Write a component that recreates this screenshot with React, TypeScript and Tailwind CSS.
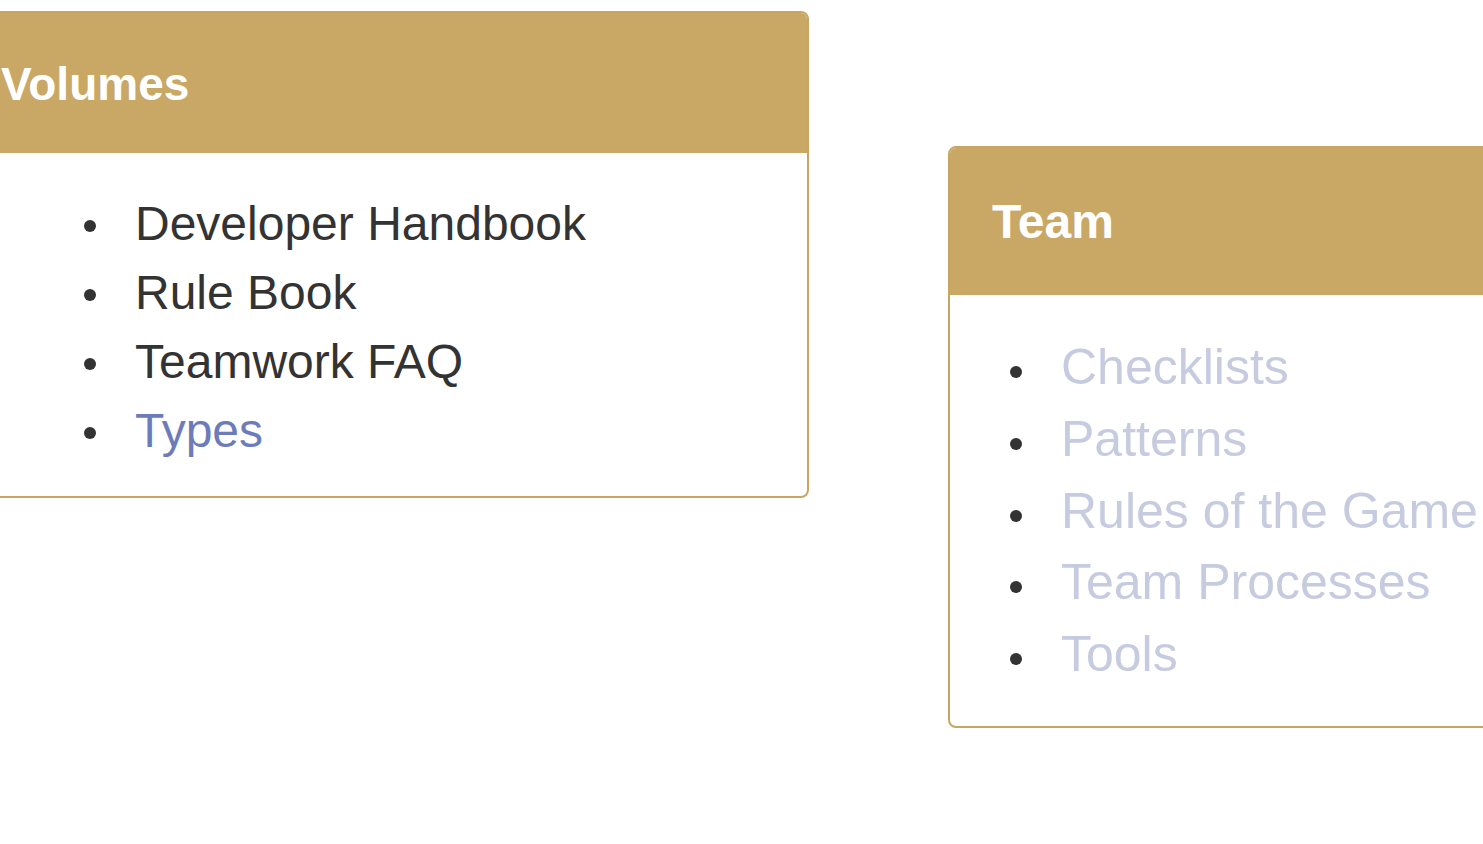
import React from 'react';

interface Item {
  label: string;
  tone: 'dark' | 'link' | 'muted';
}

const VOLUMES: Item[] = [
  { label: 'Developer Handbook', tone: 'dark' },
  { label: 'Rule Book', tone: 'dark' },
  { label: 'Teamwork FAQ', tone: 'dark' },
  { label: 'Types', tone: 'link' },
];

const TEAM: Item[] = [
  { label: 'Checklists', tone: 'muted' },
  { label: 'Patterns', tone: 'muted' },
  { label: 'Rules of the Game', tone: 'muted' },
  { label: 'Team Processes', tone: 'muted' },
  { label: 'Tools', tone: 'muted' },
];

const toneClass = (tone: Item['tone']) => {
  if (tone === 'link') return 'text-[#6c7cba]';
  if (tone === 'muted') return 'text-[#c6cbdf]';
  return 'text-[#333333]';
};

const App: React.FC = () => {
  return (
    <div className="h-[844px] w-[1483px] overflow-hidden bg-white font-['Liberation_Sans',Arial,sans-serif]">
      <div className="flex items-start">
        {/* Volumes panel */}
        <section className="ml-[-42px] mt-[11px] w-[851px] shrink-0 overflow-hidden rounded-[8px] border-2 border-[#c8a662]">
          <div className="flex h-[140px] items-center bg-[#c9a765] pl-[41px] pt-[2px]">
            <h3 className="text-[46px] font-bold leading-none text-white">Volumes</h3>
          </div>
          <ul className="pb-[31px] pl-[124px] pt-[36px] text-[48px] leading-[69px]">
            {VOLUMES.map((item) => (
              <li key={item.label} className="flex items-start gap-[39px]">
                <span className="mt-[31px] h-[12px] w-[12px] shrink-0 rounded-full bg-[#333333]" />
                <span className={toneClass(item.tone)}>{item.label}</span>
              </li>
            ))}
          </ul>
        </section>

        {/* Team panel */}
        <section className="ml-[139px] mt-[146px] w-[640px] shrink-0 overflow-hidden rounded-[8px] border-2 border-[#c8a662]">
          <div className="flex h-[147px] items-center bg-[#c9a765] pl-[42px]">
            <h3 className="text-[48px] font-bold leading-none text-white">Team</h3>
          </div>
          <ul className="pb-[35px] pl-[60px] pt-[37px] text-[50px] leading-[71.75px]">
            {TEAM.map((item) => (
              <li key={item.label} className="flex items-start gap-[39px] whitespace-nowrap">
                <span className="mt-[34px] h-[12px] w-[12px] shrink-0 rounded-full bg-[#333333]" />
                <span className={toneClass(item.tone)}>{item.label}</span>
              </li>
            ))}
          </ul>
        </section>
      </div>
    </div>
  );
};

export default App;
